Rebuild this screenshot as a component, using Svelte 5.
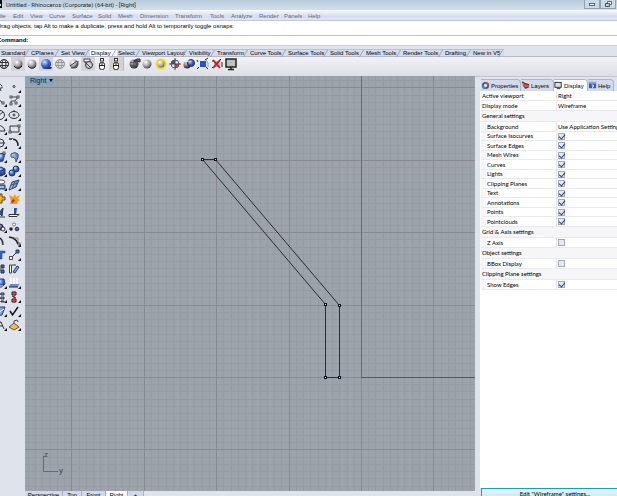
<script>
  const menus = [
    { label: 'File', width: 17 },
    { label: 'Edit', width: 17 },
    { label: 'View', width: 19 },
    { label: 'Curve', width: 23 },
    { label: 'Surface', width: 26 },
    { label: 'Solid', width: 20 },
    { label: 'Mesh', width: 22 },
    { label: 'Dimension', width: 35 },
    { label: 'Transform', width: 35 },
    { label: 'Tools', width: 21 },
    { label: 'Analyze', width: 28 },
    { label: 'Render', width: 25 },
    { label: 'Panels', width: 24 },
    { label: 'Help', width: 20 }
  ];

  const toolTabs = [
    { label: 'Standard', width: 30 },
    { label: 'CPlanes', width: 30 },
    { label: 'Set View', width: 30 },
    { label: 'Display', width: 27 },
    { label: 'Select', width: 24 },
    { label: 'Viewport Layout', width: 47 },
    { label: 'Visibility', width: 28 },
    { label: 'Transform', width: 33 },
    { label: 'Curve Tools', width: 38 },
    { label: 'Surface Tools', width: 42 },
    { label: 'Solid Tools', width: 36 },
    { label: 'Mesh Tools', width: 37 },
    { label: 'Render Tools', width: 42 },
    { label: 'Drafting', width: 28 },
    { label: 'New in V5', width: 32 }
  ];
  let activeToolTab = $state('Display');

  const mouse =
    '<rect x="4.5" y="5.5" width="5" height="7" rx="2" fill="#fff" stroke="#222"/><path d="M4.5 8.5h5M7 5.500v3" stroke="#222"/><rect x="5.500" y="1.500" width="3" height="2.500" fill="#fff" stroke="#333"/>';
  const ball = (fill, r = 4.5) => `<circle cx="7" cy="7" r="${r}" fill="${fill}"/>`;
  const wires = (color) =>
    `<g fill="none" stroke="${color}"><circle cx="7" cy="7" r="4.500"/><ellipse cx="7" cy="7" rx="2" ry="4.500"/><path d="M2.500 5.500h9M2.500 8.500h9"/></g>`;

  const displayTools = [
    { name: 'Wireframe', art: wires('#333') },
    { name: 'Shaded', art: ball('url(#grey)') + '<path d="M3 9c2 3 6 3 8 0" stroke="#222" fill="none"/>', pressed: true },
    { name: 'Rendered', art: ball('url(#grey)') + '<path d="M3 9c2 3 6 3 8 0" stroke="#333" fill="none"/>' },
    { name: 'Raytraced', art: '<path d="M3 12h9l1-2H9z" fill="#333"/>' + ball('url(#blue)', 5), pressed: true },
    { name: 'Ghosted', art: ball('#ddd') + wires('#999') },
    { name: 'X-Ray', art: ball('url(#grey)') + '<path d="M3 9l7-5M4 11c4 0 7-3 7-7" stroke="#444" fill="none"/>' },
    { name: 'Technical', art: '<path d="M3 2h6v3H3z" fill="#eee" stroke="#444"/><circle cx="8" cy="8" r="3.500" fill="#ccc" stroke="#333"/><path d="M4 5l6 6" stroke="#444"/>', pressed: true },
    { name: 'Artistic', art: mouse },
    { name: 'Pen', art: '<path d="M1 4h12M1 7h12M1 10h12" stroke="#d9c9a0"/>' + mouse, pressed: true },
    { name: 'Shade selected', art: ball('url(#dark)') + '<path d="M3 5.500h8M3 8.500h8M7 3v8" stroke="#555"/><path d="M7 4l3-2h3v3l-3-1z" fill="#777" stroke="#222"/>', gap: true },
    { name: 'Flat shade', art: ball('url(#grey)') },
    { name: 'Highlight', art: '<circle cx="7" cy="7" r="4.500" fill="url(#grey)" stroke="#f1dc16" stroke-width="2"/>' },
    { name: 'Clipping plane', art: '<circle cx="7" cy="7" r="4" fill="#eef" stroke="#556"/><path d="M7 7V3a4 4 0 00-4 4z" fill="#457"/><path d="M7 7h4a4 4 0 01-4 4z" fill="#e43b17"/><path d="M7 1v12M1 7h12" stroke="#445"/>' },
    { name: 'Lock', art: '<circle cx="5" cy="8" r="3.500" fill="url(#dark)"/><circle cx="9" cy="6" r="3.500" fill="url(#blue)" stroke="#334"/><path d="M3 5l4-1" stroke="#eee"/>' },
    { name: 'Control points', art: '<path d="M4 4h6v6H4z" fill="#2850c8"/><path d="M2 5l-1-2M9 3l3-2M3 10l-2 2M10 10l2 2" stroke="#222"/><path d="M10 3l2 3v4" stroke="#89a" fill="none"/>' },
    { name: 'Points off', art: '<path d="M4 4h6v6H4z" fill="#a9b7d6"/><path d="M3 5V3M10 3l1-1M3 10l-1 1M12 5v5" stroke="#222"/><path d="M3 3l7 8M10 3l-7 8" stroke="#d51313" stroke-width="1.800"/>' },
    { name: 'Full screen', art: '<rect x="2" y="2" width="10" height="8" fill="#b9c4bd" stroke="#222" stroke-width="1.500"/><path d="M7 10v2M4 12.500h6" stroke="#222" stroke-width="1.500"/>' }
  ];

  const node = (x, y) => `<rect x="${x}" y="${y}" width="2" height="2" fill="#fff" stroke="#333" stroke-width=".8"/>`;
  const modelTools = [
    { name: 'Select', art: '<path d="M6 3l3 3v2H7l1 3" fill="#fff" stroke="#444"/>' },
    { name: 'Point', art: '<circle cx="7" cy="6.500" r="1" fill="#fff" stroke="#333"/>', flyout: true },
    { name: 'Line', art: '<path d="M3 3l8 7" stroke="#333"/>' + node(9, 8), flyout: true },
    { name: 'Polyline', art: '<path d="M4 10V7h4l3-4H4" fill="none" stroke="#444"/>' + node(3, 2) + node(10, 2) + node(3, 9) + node(8, 8), flyout: true },
    { name: 'Circle', art: '<circle cx="7" cy="7" r="4.500" fill="none" stroke="#333"/><path d="M5 8l5-4" stroke="#333"/>', flyout: true },
    { name: 'Ellipse', art: '<ellipse cx="7" cy="7" rx="5" ry="3.500" fill="none" stroke="#333"/><circle cx="7" cy="7" r="1" fill="#fff" stroke="#333"/><path d="M7 2v2" stroke="#333"/>', flyout: true },
    { name: 'Arc', art: '<path d="M5 3q6 1 7 6H5" fill="none" stroke="#333"/>', flyout: true },
    { name: 'Rectangle', art: '<path d="M3 4h9v6H3z" fill="none" stroke="#333"/>' + node(2, 9) + node(11, 3), flyout: true },
    { name: 'Polygon', art: '<circle cx="7" cy="7" r="4" fill="none" stroke="#333"/><path d="M5 7h7" stroke="#333"/>', flyout: true },
    { name: 'Fillet curves', art: '<path d="M2 3h3q6 0 6 7" fill="none" stroke="#222" stroke-width="1.500"/><path d="M4 5l2-2" stroke="#fff"/>', flyout: true },
    { name: 'Surface from points', art: '<path d="M5 4l7-1-2 8-5 1z" fill="url(#blue)" stroke="#345"/>' + node(10, 2), flyout: true },
    { name: 'Surface from edges', art: '<path d="M4 4q4-3 7 0 1 3-2 8 0-5-5-5z" fill="url(#sky)" stroke="#456"/>', flyout: true },
    { name: 'Box', art: '<path d="M4 5l4-2 4 2v5l-4 2-4-2z" fill="url(#blue)" stroke="#236"/><path d="M4 5l4 2 4-2M8 7v5" fill="none" stroke="#236"/>', flyout: true },
    { name: 'Boolean union', art: '<circle cx="9" cy="5" r="3" fill="url(#blue)" stroke="#236"/><circle cx="5" cy="9" r="3" fill="url(#blue)" stroke="#236"/>', flyout: true },
    { name: 'Project', art: '<ellipse cx="8" cy="4" rx="4" ry="2" fill="#fff" stroke="#555"/><path d="M4 7h8v4H4z" fill="#4774ce" stroke="#345"/><path d="M5 9h6" stroke="#fff"/>', flyout: true },
    { name: 'Mesh', art: '<path d="M5 4l7-2-3 7-7 3z" fill="url(#sky)" stroke="#345"/><path d="M4 7l7-2M8 3l-3 8" stroke="#456"/>', flyout: true },
    { name: 'Join', art: '<path d="M7 2h2v3h3v3H9v3H6V8z" fill="#f7b41a" stroke="#543"/>' },
    { name: 'Explode', art: '<path d="M2 3l4 2 2-3 1 3 4-2-2 4 2 1-3 2 1 2H3l1-3z" fill="#f59a18"/><path d="M4 10l2-3 2 1-2 3z" fill="#c9300e"/>' },
    { name: 'Trim', art: '<path d="M6 7l4-5-1 8z" fill="#2b52a8" stroke="#234"/><path d="M6 11h6" stroke="#333"/>' },
    { name: 'Split', art: '<path d="M7 2h3l-1 7H7z" fill="#2b52a8"/><path d="M2 8.500h10l-2 2H2z" fill="#fff" stroke="#333"/>' },
    { name: 'Group', art: '<circle cx="7" cy="7" r="3" fill="url(#dark)" stroke="#226"/><circle cx="10" cy="9" r="2" fill="#fff" stroke="#222"/>', flyout: true },
    { name: 'Ungroup', art: '<circle cx="7" cy="4.500" r="1.500" fill="#fff" stroke="#777"/><circle cx="4" cy="9" r="1.800" fill="#223"/><circle cx="10" cy="9" r="1.800" fill="#3760c6" stroke="#333"/>' },
    { name: 'Edit points', art: '<path d="M4 3q6 1 6 8" fill="none" stroke="#333" stroke-width="1.500"/>' },
    { name: 'Control points on', art: '<path d="M2 3l4 1q4 2 5 6" fill="none" stroke="#222" stroke-width="1.500"/><path d="M7 4h4v4" fill="none" stroke="#888"/>' + node(11, 9), flyout: true },
    { name: 'Text object', art: '<path d="M4 3h8v2H9v6H7V5H4z" fill="#3a67c8" stroke="#236" stroke-width=".5"/>' },
    { name: 'Move', art: '<path d="M4 10l6-6" stroke="#333"/><path d="M2.500 8.500h3v3h-3z" fill="#fff" stroke="#444"/><path d="M9 2h3v3H9z" fill="#3a67c8" stroke="#345"/>', flyout: true },
    { name: 'Copy', art: '<path d="M8 3h3v3H8zM8 8h3v3H8z" fill="#3a67c8" stroke="#234"/><path d="M4 6h3v3H4z" fill="#8aa6dc" stroke="#234"/>' },
    { name: 'Rotate', art: '<path d="M2.500 3h2v8h-2z" fill="#fff" stroke="#444"/><path d="M6 10l4-6 2 1-4 6z" fill="#7fa0e0" stroke="#345"/><path d="M5 3l4 0" stroke="#333"/>' },
    { name: 'Solid editing', art: '<path d="M4 3h7l1 5-3 3H4z" fill="url(#blue)" stroke="#345"/><path d="M5 10h5" stroke="#ddd"/>', flyout: true },
    { name: 'Extrude', art: '<path d="M4 2v6M7 2v6M10 2v6" stroke="#fff" stroke-width="1.500"/><path d="M3 8h9l-1 3H2z" fill="#6d8fd8"/><path d="M2 11h9" stroke="#223"/>', flyout: true },
    { name: 'Array', art: '<path d="M4 3h3v2H4zM8 3h3v2H8zM4 7h3v2H4zM8 7h3v2H8zM4 11h3v1H4zM8 11h3v1H8z" fill="#9db3e0" stroke="#333"/>', flyout: true },
    { name: 'Check objects', art: '<path d="M5 2h4v3H5zM5 9h4v3H5z" fill="#f66" stroke="#222"/><path d="M7 1v12" stroke="#d22"/><path d="M5 6l4 2" stroke="#222"/>', flyout: true },
    { name: 'Surface tools', art: '<path d="M6 3h6l-3 8-6 1z" fill="url(#sky)" stroke="#345"/><path d="M5 9l6-4" stroke="#fff"/>', flyout: true },
    { name: 'Accept', art: '<path d="M3 7l2.500 4L11 3" fill="none" stroke="#111" stroke-width="1.500"/>', flyout: true },
    { name: 'Measure', art: '<path d="M5 11l2-7h1l3 7M6 8h4" fill="none" stroke="#333"/>', flyout: true },
    { name: 'Render', art: '<path d="M2 9l5-4 5 4-5 3z" fill="#f2bc3e" stroke="#654"/><path d="M7 5V3l3-1 1 2" fill="none" stroke="#444"/>', flyout: true }
  ];

  const panelTabs = [
    { label: 'Properties', width: 40, art: '<circle cx="5" cy="5" r="3" fill="none" stroke="#2a59c4" stroke-width="2"/><path d="M5 2a3 3 0 013 3" fill="none" stroke="#e8471c" stroke-width="2"/><path d="M5 8a3 3 0 01-3-3" fill="none" stroke="#35a04a" stroke-width="2"/>' },
    { label: 'Layers', width: 33, art: '<path d="M1 4l4 5 4-2V5L5 6z" fill="#2449a4"/><path d="M1 1l2 5 6 1V4z" fill="#e8502a"/><path d="M1 1l4 2 4 1" fill="none" stroke="#222"/>' },
    { label: 'Display', width: 34, art: '<rect x="1" y="1.500" width="7" height="5.500" fill="#dce2e2" stroke="#222"/><path d="M3 8.500h4" stroke="#222"/>' },
    { label: 'Help', width: 26, art: '<path d="M1 1h8v7H1z" fill="#3359b8"/><path d="M1 1h8v2H1z" fill="#8fa8dc"/><path d="M4 4.500h2v2H5v1" fill="none" stroke="#fff"/>' }
  ];
  let activePanel = $state('Display');

  let sections = $state([
    { title: '', rows: [{ label: 'Active viewport', value: 'Right' }, { label: 'Display mode', value: 'Wireframe' }] },
    {
      title: 'General settings',
      rows: [
        { label: 'Background', value: 'Use Application Settings' },
        { label: 'Surface Isocurves', checked: true },
        { label: 'Surface Edges', checked: true },
        { label: 'Mesh Wires', checked: true },
        { label: 'Curves', checked: true },
        { label: 'Lights', checked: true },
        { label: 'Clipping Planes', checked: true },
        { label: 'Text', checked: true },
        { label: 'Annotations', checked: true },
        { label: 'Points', checked: true },
        { label: 'Pointclouds', checked: true }
      ]
    },
    { title: 'Grid & Axis settings', rows: [{ label: 'Z Axis', checked: false }] },
    { title: 'Object settings', rows: [{ label: 'BBox Display', checked: false }] },
    { title: 'Clipping Plane settings', rows: [{ label: 'Show Edges', checked: true }] }
  ]);

  const viewTabs = [
    { label: 'Perspective', width: 38 },
    { label: 'Top', width: 19 },
    { label: 'Front', width: 24 },
    { label: 'Right', width: 22 },
    { label: '+', width: 16 }
  ];
  let activeView = $state('Right');
  let command = $state('');

  // World origin and grid pitch inside the viewport
  const origin = { x: 336, y: 301 };
  const pitch = 7.24;
  const steps = Array.from({ length: 361 }, (_, i) => i - 180);
  const minor = steps.filter((n) => n % 10 !== 0);
  const major = steps.filter((n) => n % 10 === 0);
  const at = (base, n) => Math.round(base + n * pitch) + 0.5;

  const points = [[177, 83], [190, 83], [314, 229], [314, 301], [300, 301], [300, 228]];
  const outline = points.map(([x, y]) => `${x + 0.5},${y + 0.5}`).join(' ');

  const slug = (text) => text.toLowerCase().replace(/[^a-z]+/g, '-');
</script>

<svg class="defs" aria-hidden="true">
  <defs>
    <radialGradient id="grey" cx=".35" cy=".3" r=".8"><stop offset="0" stop-color="#fff" /><stop offset=".5" stop-color="#aaa" /><stop offset="1" stop-color="#333" /></radialGradient>
    <radialGradient id="dark" cx=".35" cy=".3" r=".8"><stop offset="0" stop-color="#ccc" /><stop offset=".5" stop-color="#666" /><stop offset="1" stop-color="#111" /></radialGradient>
    <radialGradient id="blue" cx=".35" cy=".3" r=".8"><stop offset="0" stop-color="#cfe0ff" /><stop offset=".5" stop-color="#3a68d4" /><stop offset="1" stop-color="#142a80" /></radialGradient>
    <linearGradient id="sky"><stop offset="0" stop-color="#c8d8fa" /><stop offset="1" stop-color="#4a76cc" /></linearGradient>
  </defs>
</svg>

<div class="app">
  <header class="titlebar">
    <svg class="logo" viewBox="0 0 4 8"><path d="M0 0h2v8H0z" fill="#111" /><path d="M0 4h1v2H0z" fill="#ddd" /></svg>
    <h1>Untitled - Rhinoceros (Corporate) (64-bit) - [Right]</h1>
    <button class="window-btn" aria-label="Minimize">
      <svg viewBox="0 0 14 8"><rect x="4.5" y="3.500" width="5" height="2" fill="#fff" stroke="#566" /></svg>
    </button>
    <button class="window-btn" aria-label="Restore">
      <svg viewBox="0 0 14 8"><path d="M6.500 1.500h4v3h-4z" fill="#fff" stroke="#566" /><path d="M4.500 3.500h4v3h-4z" fill="#ccd" stroke="#455" /></svg>
    </button>
  </header>

  <nav class="menubar">
    {#each menus as menu}
      <button style:width="{menu.width}px">{menu.label}</button>
    {/each}
  </nav>

  <div class="history">Drag objects, tap Alt to make a duplicate, press and hold Alt to temporarily toggle osnaps:</div>
  <div class="prompt">
    <label for="command">Command:</label>
    <input id="command" type="text" autocomplete="off" bind:value={command} />
  </div>

  <div class="tool-tabs">
    {#each toolTabs as tab}
      <button
        class:active={activeToolTab === tab.label}
        style:width="{tab.width}px"
        onclick={() => (activeToolTab = tab.label)}
      >
        {tab.label}
      </button>
    {/each}
  </div>

  <div class="toolbar">
    {#each displayTools as tool}
      <button class="tool" class:pressed={tool.pressed} class:gap={tool.gap} aria-label={tool.name}>
        <svg viewBox="0 0 14 14">{@html tool.art}</svg>
      </button>
    {/each}
  </div>

  <main>
    <aside class="palette">
      {#each modelTools as tool}
        <button class="tool" class:flyout={tool.flyout} aria-label={tool.name}>
          <svg viewBox="0 0 14 14">{@html tool.art}</svg>
        </button>
      {/each}
    </aside>

    <section class="workspace">
      <div class="viewport">
        <svg class="canvas">
          <g class="minor">
            {#each minor as n}
              <line x1={at(origin.x, n)} x2={at(origin.x, n)} y1="0" y2="100%" />
              <line x1="0" x2="100%" y1={at(origin.y, n)} y2={at(origin.y, n)} />
            {/each}
          </g>
          <g class="major">
            {#each major as n}
              <line x1={at(origin.x, n)} x2={at(origin.x, n)} y1="0" y2="100%" />
              <line x1="0" x2="100%" y1={at(origin.y, n)} y2={at(origin.y, n)} />
            {/each}
          </g>
          <line class="z-axis" x1={origin.x + 0.5} x2={origin.x + 0.5} y1="0" y2={origin.y} />
          <line class="y-axis" x1={origin.x} x2="100%" y1={origin.y + 0.5} y2={origin.y + 0.5} />
          <polygon class="outline" points={outline} />
          {#each points as [x, y]}
            <rect class="grip" x={x - 0.5} y={y - 0.5} width="2" height="2" />
          {/each}
        </svg>
        <button class="view-title">Right <span></span></button>
        <svg class="gizmo" viewBox="0 0 24 24">
          <path d="M2.500 4v15.500H17" />
          <text x="3" y="5">z</text>
          <text x="18" y="21">y</text>
        </svg>
      </div>
      <div class="view-tabs">
        {#each viewTabs as tab}
          <button
            class:active={activeView === tab.label}
            style:width="{tab.width}px"
            onclick={() => (activeView = tab.label)}
          >
            {tab.label}
          </button>
        {/each}
      </div>
    </section>

    <aside class="panel">
      <div class="panel-tabs">
        {#each panelTabs as tab}
          <button
            class:active={activePanel === tab.label}
            style:width="{tab.width}px"
            onclick={() => (activePanel = tab.label)}
          >
            <svg viewBox="0 0 10 10">{@html tab.art}</svg>{tab.label}
          </button>
        {/each}
      </div>
      <div class="panel-body">
        <table>
          {#each sections as section}
            <tbody class:grouped={section.title}>
              {#if section.title}
                <tr class="heading"><th colspan="2">{section.title}</th></tr>
              {/if}
              {#each section.rows as row}
                <tr>
                  <th scope="row">
                    {#if row.value}{row.label}{:else}<label for={slug(row.label)}>{row.label}</label>{/if}
                  </th>
                  <td>
                    {#if row.value}
                      {row.value}
                    {:else}
                      <input id={slug(row.label)} type="checkbox" bind:checked={row.checked} />
                    {/if}
                  </td>
                </tr>
              {/each}
            </tbody>
          {/each}
        </table>
      </div>
      <div class="panel-foot">
        <button>Edit "Wireframe" settings...</button>
      </div>
    </aside>
  </main>
</div>

<style>
  :global(body) {
    overflow: hidden;
  }

  .app,
  .app :global(*) {
    box-sizing: border-box;
  }

  .app {
    display: flex;
    flex-direction: column;
    height: 100vh;
    background: #dfe3ec;
    color: #000;
    font: 6px/8px 'Liberation Sans', sans-serif;
    white-space: nowrap;
  }

  .defs {
    position: absolute;
    width: 0;
    height: 0;
  }

  button,
  input {
    margin: 0;
    padding: 0;
    border: 0;
    border-radius: 0;
    background: none;
    color: inherit;
    font: inherit;
  }

  .titlebar {
    display: flex;
    flex: none;
    height: 10px;
    padding-right: 1px;
    background: linear-gradient(#b9cbda, #d2e0ec);
  }

  .logo {
    width: 4px;
    height: 8px;
    margin-right: 2px;
  }

  h1 {
    flex: 1;
    margin: 0;
    color: #1c2833;
    font: 6px/9px Roboto, sans-serif;
  }

  .window-btn {
    width: 16px;
    height: 9px;
    border: 1px solid #8fa1b3;
    border-top: 0;
    background: #ccd9e6;
  }

  .window-btn svg {
    display: block;
    width: 14px;
    height: 8px;
  }

  .menubar {
    display: flex;
    flex: none;
    height: 11px;
    padding-top: 1px;
    margin-left: -4px;
    border-top: 1px solid #f6f9fd;
    border-bottom: 1px solid #c4c8d6;
    background: linear-gradient(#f0f4fc, #d5dcf0 60%, #e2e7f6);
    color: #666a74;
  }

  .menubar button {
    text-align: left;
  }

  .history,
  .prompt {
    display: flex;
    flex: none;
    background: #fff;
  }

  .history {
    height: 15px;
    padding-top: 1px;
    text-indent: -3px;
    border-bottom: 1px solid #c0c3cc;
  }

  .prompt {
    height: 9px;
    text-indent: -3px;
  }

  .prompt label {
    font-weight: bold;
  }

  .prompt input {
    flex: 1;
    outline: none;
  }

  .tool-tabs {
    display: flex;
    flex: none;
    height: 12px;
    padding-top: 3px;
    border-top: 1px solid #c9cdd8;
    border-bottom: 1px solid #b4b8c8;
  }

  .tool-tabs button {
    position: relative;
    padding-left: 1px;
    border-top: 1px solid #b9c0d2;
    background: #d5dcec;
    line-height: 7px;
    text-align: left;
  }

  .tool-tabs button::after {
    content: '';
    position: absolute;
    top: 0;
    right: 3px;
    width: 1px;
    height: 7px;
    background: #9ba3b8;
    transform: skewX(-30deg);
  }

  .tool-tabs .active {
    background: #fff;
  }

  .toolbar {
    display: flex;
    flex: none;
    height: 19px;
    margin-left: -3px;
    background: linear-gradient(#f1f2f5, #dcdfe6);
  }

  .tool {
    position: relative;
    width: 14px;
    height: 14px;
  }

  .tool svg {
    display: block;
    width: 14px;
    height: 14px;
  }

  .pressed {
    background: #d2d4d9;
  }

  .toolbar .gap {
    width: 17px;
    padding-left: 3px;
    border-left: 1px solid #b5b8c0;
  }

  .flyout::after {
    content: '';
    position: absolute;
    right: 0;
    bottom: 1px;
    border-top: 3px solid transparent;
    border-right: 3px solid #111;
  }

  main {
    display: flex;
    flex: 1;
    min-height: 0;
  }

  .palette {
    display: grid;
    flex: none;
    grid-template-columns: 14px 14px;
    align-content: start;
    width: 32px;
    margin-left: -7px;
    padding-top: 3px;
    border-top: 1px solid #c3c6cf;
  }

  .workspace {
    display: flex;
    flex: 1;
    flex-direction: column;
    min-width: 0;
  }

  .viewport {
    position: relative;
    flex: 1;
    min-height: 0;
    overflow: hidden;
    background: #9da3aa;
  }

  .canvas {
    display: block;
    width: 100%;
    height: 100%;
  }

  .minor {
    stroke: #969ca4;
  }

  .major {
    stroke: #878a91;
  }

  .z-axis {
    stroke: #3f8a45;
  }

  .y-axis {
    stroke: #8a4149;
  }

  .outline {
    fill: none;
    stroke: #2a2c30;
  }

  .grip {
    fill: #ddd;
    stroke: #111;
  }

  .view-title {
    position: absolute;
    top: 0;
    left: 1px;
    display: flex;
    align-items: center;
    gap: 3px;
    height: 9px;
    padding: 0 1px 0 4px;
    background: #8aa4c0;
    color: #101c30;
    font-size: 7px;
    line-height: 9px;
  }

  .view-title span {
    border: 2px solid transparent;
    border-top: 3px solid #111;
    border-bottom: 0;
  }

  .gizmo {
    position: absolute;
    bottom: 15px;
    left: 16px;
    width: 24px;
    height: 24px;
    overflow: visible;
  }

  .gizmo path {
    fill: none;
    stroke: #666a70;
  }

  .gizmo text {
    fill: #44474c;
    font-size: 8px;
  }

  .view-tabs {
    display: flex;
    flex: none;
    height: 5px;
    overflow: hidden;
    background: #dfe3ec;
  }

  .view-tabs button {
    height: 9px;
    border-right: 1px solid #a9b0c2;
    background: #d0d8ea;
    line-height: 9px;
    text-align: center;
  }

  .view-tabs .active {
    background: #fff;
  }

  .panel {
    display: flex;
    flex: none;
    flex-direction: column;
    width: 142px;
    padding-left: 5px;
    border-top: 1px solid #c3c6cf;
    overflow: hidden;
  }

  .panel-tabs {
    display: flex;
    flex: none;
    height: 14px;
    padding: 2px 0 0 1px;
  }

  .panel-tabs button {
    display: flex;
    flex: none;
    align-items: center;
    gap: 1px;
    border-top: 1px solid #aeb6c8;
    border-right: 1px solid #aeb6c8;
    border-top-right-radius: 4px;
    background: #d3daea;
  }

  .panel-tabs svg {
    flex: none;
    width: 9px;
    height: 9px;
  }

  .panel-tabs .active {
    background: #fff;
  }

  .panel-body {
    flex: 1;
    min-height: 0;
    padding-left: 1px;
    background: #fff;
    font-family: Lato, sans-serif;
    overflow: hidden;
  }

  table {
    width: 100%;
    table-layout: fixed;
    border-spacing: 0;
  }

  th,
  td {
    height: 10px;
    padding: 0 0 0 1px;
    border-bottom: 1px solid #e9eaee;
    font-weight: normal;
    line-height: 8px;
    text-align: left;
    vertical-align: middle;
  }

  .grouped tr:nth-child(odd) > * {
    height: 9px;
  }

  .grouped tr.heading > th {
    height: 11px;
    background: #f6f6f8;
  }

  th[scope] {
    width: 76px;
    border-right: 1px solid #e4e5ea;
  }

  .grouped th[scope] {
    padding-left: 6px;
    box-shadow: inset 5px 0 #f6f6f8;
  }

  input[type='checkbox'] {
    display: block;
    width: 7px;
    height: 7px;
    border: 1px solid #a5a9b2;
    background: #e6e9ef;
    appearance: none;
  }

  input[type='checkbox']:checked::after {
    content: '';
    display: block;
    width: 3px;
    height: 5px;
    margin-left: 1px;
    margin-top: -1px;
    border: solid #1f3f9c;
    border-width: 0 1px 1px 0;
    transform: rotate(40deg);
  }

  .panel-foot {
    flex: none;
    height: 8px;
    overflow: hidden;
    padding-left: 1px;
  }

  .panel-foot button {
    display: flex;
    justify-content: center;
    width: calc(100% + 12px);
    height: 14px;
    border: 1px solid #1c9cc4;
    background: linear-gradient(#e6f5fb, #bfe3f2);
    font-family: Lato, sans-serif;
    line-height: 9px;
  }
</style>
